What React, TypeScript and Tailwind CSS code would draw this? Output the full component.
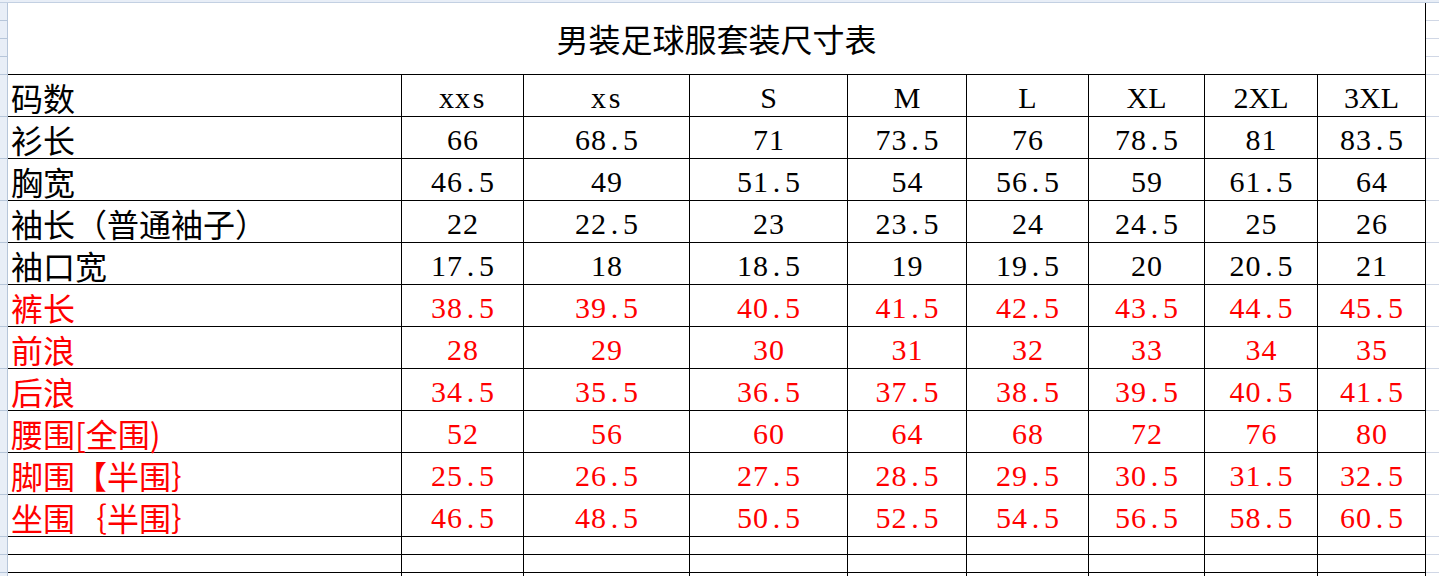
import React from 'react'

// column widths in px, border included (label + 8 sizes)
const COLS = [394, 122, 166, 158, 119, 122, 116, 113, 108]
const COL_W = [
  'w-[394px]',
  'w-[122px]',
  'w-[166px]',
  'w-[158px]',
  'w-[119px]',
  'w-[122px]',
  'w-[116px]',
  'w-[113px]',
  'w-[108px]',
]

const SIZES = ['xxs', 'xs', 'S', 'M', 'L', 'XL', '2XL', '3XL']

const ROWS = [
  { label: '衫长', vals: ['66', '68.5', '71', '73.5', '76', '78.5', '81', '83.5'] },
  { label: '胸宽', vals: ['46.5', '49', '51.5', '54', '56.5', '59', '61.5', '64'] },
  { label: '袖长（普通袖子）', vals: ['22', '22.5', '23', '23.5', '24', '24.5', '25', '26'] },
  { label: '袖口宽', vals: ['17.5', '18', '18.5', '19', '19.5', '20', '20.5', '21'] },
  { label: '裤长', red: true, vals: ['38.5', '39.5', '40.5', '41.5', '42.5', '43.5', '44.5', '45.5'] },
  { label: '前浪', red: true, vals: ['28', '29', '30', '31', '32', '33', '34', '35'] },
  { label: '后浪', red: true, vals: ['34.5', '35.5', '36.5', '37.5', '38.5', '39.5', '40.5', '41.5'] },
  { label: '腰围[全围)', red: true, vals: ['52', '56', '60', '64', '68', '72', '76', '80'] },
  { label: '脚围【半围｝', red: true, vals: ['25.5', '26.5', '27.5', '28.5', '29.5', '30.5', '31.5', '32.5'] },
  { label: '坐围｛半围｝', red: true, vals: ['46.5', '48.5', '50.5', '52.5', '54.5', '56.5', '58.5', '60.5'] },
]

const cjk = "font-['Noto_Sans_CJK_SC','Noto_Sans',sans-serif]"
const serif = "font-['Liberation_Serif','DejaVu_Serif',serif]"

// half-width chars laid out on a fixed pitch, like SimSun
function Mono({ text }: { text: string }) {
  return (
    <span className="inline-flex">
      {text.split('').map((ch, i) => (
        <span key={i} className="inline-block w-[16px] text-center">
          {ch}
        </span>
      ))}
    </span>
  )
}

function Gutter({ h }: { h: string }) {
  return <div className={`${h} w-[8px] shrink-0 bg-[#e8eef7] border-r border-b border-[#b7c6da]`} />
}

function Filler({ h }: { h: string }) {
  return <div className={`${h} flex-1 border-b border-[#d0d7e5]`} />
}

function SizeRow({ label, cells, red, header }: { label: string; cells: string[]; red?: boolean; header?: boolean }) {
  const color = red ? 'text-[#ff0000]' : 'text-black'
  return (
    <div className="flex">
      <Gutter h="h-[42px]" />
      <div className={`flex border-b border-black ${color}`}>
        <div className={`${COL_W[0]} h-[41px] border-r border-black flex items-center pl-[3px] pt-[3px] ${cjk} text-[32px] leading-none`}>
          {label}
        </div>
        {cells.map((v, i) => (
          <div
            key={i}
            className={`${COL_W[i + 1]} h-[41px] border-r border-black flex items-center justify-center pt-[5px] ${serif} text-[30px] leading-none`}
          >
            {header && /[A-Z]/.test(v) ? v : <Mono text={v} />}
          </div>
        ))}
      </div>
      <Filler h="h-[42px]" />
    </div>
  )
}

function EmptyRow() {
  return (
    <div className="flex">
      <Gutter h="h-[18px]" />
      <div className="flex border-b border-black">
        {COL_W.map((w, i) => (
          <div key={i} className={`${w} h-[17px] border-r border-black`} />
        ))}
      </div>
      <Filler h="h-[18px]" />
    </div>
  )
}

export default function App() {
  const tableW = COLS.reduce((a, b) => a + b, 0)
  return (
    <div className="w-[1439px] h-[576px] overflow-hidden bg-white flex flex-col">
      <div className="h-[3px] shrink-0 bg-[#e8eef7] border-b border-[#c3d0e2]" />

      {/* title block spans four sheet rows */}
      <div className="flex">
        <div className="flex flex-col">
          {[0, 1, 2, 3].map((i) => (
            <Gutter key={i} h="h-[18px]" />
          ))}
        </div>
        <div
          className={`h-[72px] border-r border-b border-black flex items-center justify-center pb-[1px] ${cjk} text-[32px] leading-none text-black`}
          style={{ width: tableW }}
        >
          男装足球服套装尺寸表
        </div>
        <div className="flex flex-col flex-1">
          {[0, 1, 2, 3].map((i) => (
            <Filler key={i} h="h-[18px]" />
          ))}
        </div>
      </div>

      <SizeRow label="码数" cells={SIZES} header />
      {ROWS.map((r) => (
        <SizeRow key={r.label} label={r.label} cells={r.vals} red={r.red} />
      ))}
      <EmptyRow />
      <EmptyRow />
      <EmptyRow />
    </div>
  )
}
